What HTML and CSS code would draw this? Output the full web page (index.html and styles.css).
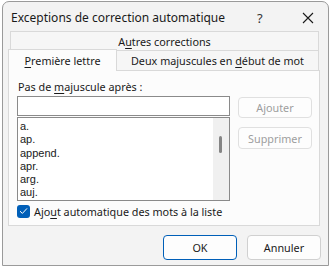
FILE: index.html
```html
<!DOCTYPE html>
<html lang="fr">
<head>
<meta charset="utf-8">
<title>Exceptions de correction automatique</title>
<link rel="stylesheet" href="styles.css">
</head>
<body>
<div class="window">
  <div class="titlebar">
    <span class="title">Exceptions de correction automatique</span>
    <span class="help">?</span>
    <span class="close"><svg width="12" height="12" viewBox="0 0 12 12"><path d="M1 1 L11 11 M11 1 L1 11" stroke="#1a1a1a" stroke-width="1.1" fill="none"/></svg></span>
  </div>
  <div class="tabs">
    <div class="tabrow back">
      <div class="tab tab-wide"><span>A<u>u</u>tres corrections</span></div>
    </div>
    <div class="tabrow front">
      <div class="tab tab-selected"><span><u>P</u>remière lettre</span></div>
      <div class="tab tab-other"><span>Deux majuscules en <u>d</u>ébut de mot</span></div>
    </div>
    <div class="panel">
      <div class="label">Pas de <u>m</u>ajuscule après :</div>
      <div class="editrow">
        <div class="fields">
          <div class="input"></div>
          <div class="list">
            <div class="items">
              <div>a.</div>
              <div>ap.</div>
              <div>append.</div>
              <div>apr.</div>
              <div>arg.</div>
              <div>auj.</div>
            </div>
            <div class="scrollbar"><div class="thumb"></div></div>
          </div>
        </div>
        <div class="sidebtns">
          <div class="btn disabled btn-add">Ajouter</div>
          <div class="btn disabled btn-del">Supprimer</div>
        </div>
      </div>
      <div class="check">
        <span class="box"><svg width="9" height="8" viewBox="0 0 9 8"><path d="M1 4.2 L3.4 6.4 L8 1.4" stroke="#fff" stroke-width="1" fill="none"/></svg></span>
        <span>Ajo<u>u</u>t automatique des mots à la liste</span>
      </div>
    </div>
  </div>
  <div class="footer">
    <div class="btn btn-ok">OK</div>
    <div class="btn">Annuler</div>
  </div>
</div>
</body>
</html>
```
FILE: styles.css
```css
* { box-sizing: border-box; }
html, body { margin: 0; padding: 0; }
body {
  background: #ffffff;
  width: 330px;
  height: 267px;
  overflow: hidden;
  font-family: "Noto Sans", "DejaVu Sans", sans-serif;
  font-size: 10.8px;
  color: #1a1a1a;
}
u { text-decoration: underline; text-underline-offset: 2px; text-decoration-thickness: 1px; }
.window {
  margin: 1px 0 0 2px;
  width: 327px;
  height: 265px;
  border: 1px solid #9a9a9a;
  border-radius: 7px 7px 0 0;
  background: #f3f3f3;
  display: flex;
  flex-direction: column;
}
.titlebar {
  height: 29px;
  display: flex;
  align-items: center;
  padding: 2px 0 0 8px;
  font-size: 12px;
}
.title { flex: 1; }
.help { width: 12px; margin-right: 33px; font-size: 13px; color: #333; }
.close { width: 12px; margin-right: 14px; display: flex; }
.tabs {
  margin-left: 5px;
  width: 312px;
  display: flex;
  flex-direction: column;
}
.tabrow { display: flex; }
.tab {
  border: 1px solid #d9d9d9;
  background: #f6f6f6;
  display: flex;
  align-items: center;
  justify-content: center;
  white-space: nowrap;
}
.back { padding-left: 2px; }
.tab-wide { width: 309px; height: 20px; padding-top: 1px; }
.front { margin-top: -1px; position: relative; z-index: 1; }
.tab-selected {
  width: 109px;
  margin-top: -1px;
  background: #fcfcfc;
  border-bottom: none;
  height: 22px;
}
.tab-other { width: 203px; height: 20px; margin-left: -1px; border-bottom: none; }
.panel {
  margin-top: -1px;
  height: 156px;
  border: 1px solid #d9d9d9;
  background: #fcfcfc;
  padding: 9px 0 0 8px;
}
.label { padding-left: 1px; height: 16px; line-height: 14px; }
.editrow { display: flex; }
.fields { width: 213px; }
.input {
  height: 20px;
  border: 1px solid #8a8a8a;
  background: #fff;
}
.list {
  margin-top: 1px;
  height: 84px;
  border: 1px solid #8a8a8a;
  background: #fff;
  display: flex;
  overflow: hidden;
}
.items {
  flex: 1;
  padding: 2px 0 0 2px;
  line-height: 13.3px;
  font-family: "Liberation Sans", Arial, sans-serif;
  font-size: 11px;
}
.scrollbar { width: 16px; background: #f0f0f0; padding: 18px 0 0 6px; }
.thumb { width: 3px; height: 17px; background: #858585; border-radius: 2px; }
.sidebtns { margin-left: 8px; padding-top: 1px; display: flex; flex-direction: column; gap: 9px; }
.btn {
  width: 74px;
  height: 25px;
  border: 1px solid #d0d0d0;
  border-radius: 4px;
  background: #fdfdfd;
  display: flex;
  align-items: center;
  justify-content: center;
}
.btn.disabled { color: #9d9d9d; border-color: #e0e0e0; }
.btn-add { height: 21px; }
.btn-del { height: 22px; }
.check {
  margin-top: 2px;
  display: flex;
  align-items: center;
  gap: 4px;
  height: 16px;
}
.box {
  width: 13px;
  height: 13px;
  border-radius: 3px;
  background: #005fb8;
  display: flex;
  align-items: center;
  justify-content: center;
}
.footer {
  display: flex;
  gap: 10px;
  padding: 9px 0 0 160px;
}
.btn-ok { border-color: #005fb8; }
```
